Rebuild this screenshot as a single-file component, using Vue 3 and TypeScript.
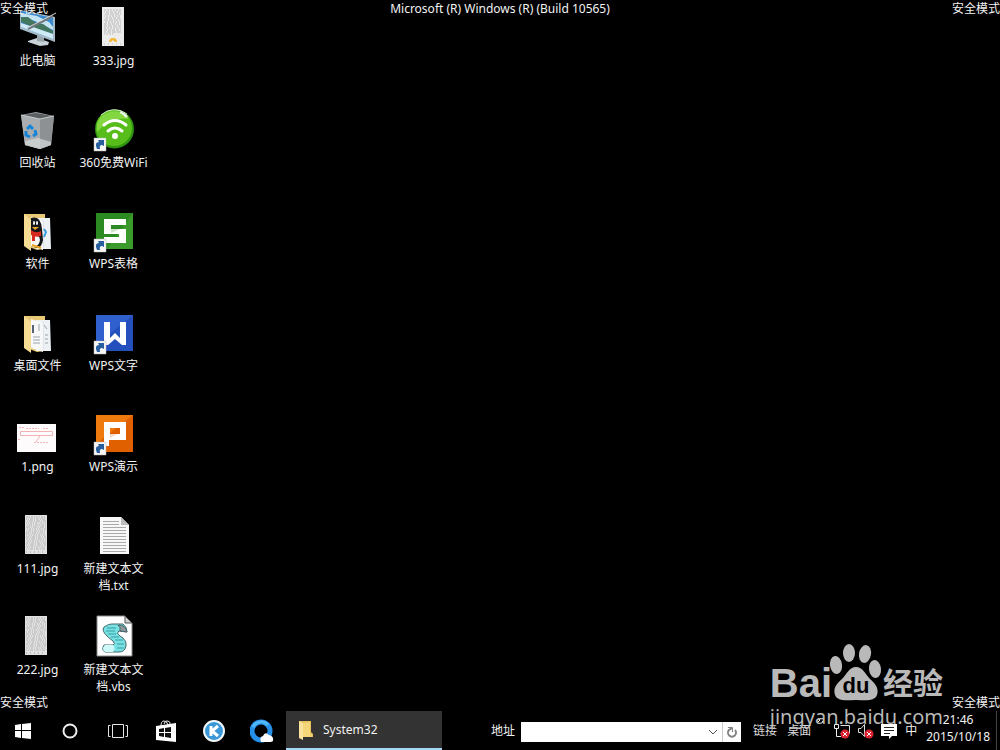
<script setup lang="ts">
import { ref } from 'vue'

type Kind =
  | 'pc' | 'bin' | 'qqfolder' | 'docfolder' | 'png' | 'jpg'
  | 'jpgsun' | 'wifi' | 'sheet' | 'writer' | 'slides' | 'txt' | 'vbs'

interface DesktopItem {
  name: string
  kind: Kind
  shortcut?: boolean
}

const items: DesktopItem[] = [
  { name: '此电脑', kind: 'pc' },
  { name: '回收站', kind: 'bin' },
  { name: '软件', kind: 'qqfolder' },
  { name: '桌面文件', kind: 'docfolder' },
  { name: '1.png', kind: 'png' },
  { name: '111.jpg', kind: 'jpg' },
  { name: '222.jpg', kind: 'jpg' },
  { name: '333.jpg', kind: 'jpgsun' },
  { name: '360免费WiFi', kind: 'wifi', shortcut: true },
  { name: 'WPS表格', kind: 'sheet', shortcut: true },
  { name: 'WPS文字', kind: 'writer', shortcut: true },
  { name: 'WPS演示', kind: 'slides', shortcut: true },
  { name: '新建文本文档.txt', kind: 'txt' },
  { name: '新建文本文档.vbs', kind: 'vbs' },
]

const corners = ['top-left', 'top-right', 'bottom-left', 'bottom-right']
const textRows = Array.from({ length: 17 }, (_, i) => i)
const address = ref('')
</script>

<template>
  <div class="screen">
    <main class="desktop">
      <div class="icons">
        <button v-for="item in items" :key="item.name" type="button" class="item">
          <svg class="picture" viewBox="0 0 49 52" aria-hidden="true">
            <g v-if="item.kind === 'pc'">
              <path d="M15 41 24 38 36 42 35 45 27 46 15 42Z" fill="#c9d2d6" />
              <path d="M24 35 31 37 31 42 24 41Z" fill="#9aa7ad" />
              <path d="M7 10 42 17 42 42 7 29Z" fill="#a5bac6" />
              <path d="M8 11 40 18 40 39 8 27Z" fill="#3a8bd0" />
              <path d="M8 13 24 16 36 22 40 27V30L22 21 8 17Z" fill="#c4e3f5" />
              <path d="M8 17 15 17 23 23 30 24 40 31 40 34 22 28 8 22Z" fill="#447760" />
              <path d="M8 23 20 27 40 34 40 39 8 27Z" fill="#cfeaf4" />
              <path d="M15 29 40 16" stroke="#6f777b" stroke-width="2" />
              <path d="M14 28 43 13" stroke="#d0d3d4" stroke-width="1" />
            </g>

            <g v-else-if="item.kind === 'bin'">
              <path d="M8 13 23 10 41 14 38 43 27 47 12 43Z" fill="#9ea2a5" />
              <path d="M8 13 27 17 27 47 12 43Z" fill="#a9adb0" />
              <path d="M27 17 41 14 38 43 27 47Z" fill="#8d9194" />
              <path d="M10 13 23 11 39 14 27 17Z" fill="#5c5f61" />
              <path d="M12 39 25 36 38 40 38 43 27 47 12 43Z" fill="#d5d8da" opacity="0.7" />
              <path d="M8 13 27 17 41 14" fill="none" stroke="#c6c9ca" />
              <g fill="none" stroke="#1684d6" stroke-width="3">
                <path d="M14 27 17 24 20 27" />
                <path d="M22 28 23 32 20 34" />
                <path d="M17 35 13 33 13 29" />
              </g>
            </g>

            <g v-else-if="item.kind === 'qqfolder' || item.kind === 'docfolder'">
              <path d="M11 11H32V17H37V45L24 47 11 42Z" fill="#e9c875" />
              <path d="M23 15 37 15 38 46 23 46Z" fill="#eef2f4" />
              <path d="M30 17V45" stroke="#cbd3d8" />
              <path d="M18 14 30 18V47L18 43Z" fill="#f7f8f8" />
              <g v-if="item.kind === 'qqfolder'">
                <path d="M31 26 33 29 31 34" fill="none" stroke="#3d9be0" stroke-width="2" />
                <path d="M18 15Q28 12 29 26L30 37Q29 44 24 45L18 43Z" fill="#15181b" />
                <path d="M18 31Q27 31 27 37Q26 43 21 44L18 43Z" fill="#f8f8f8" />
                <path d="M18 27Q23 31 28 28L28 33Q23 35 18 32Z" fill="#d8291f" />
                <path d="M19 32H22V38H19Z" fill="#d8291f" />
                <path d="M19 24H26L22 27Z" fill="#efab27" />
                <ellipse cx="21" cy="20" rx="1" ry="2" fill="#fff" />
                <ellipse cx="24" cy="20" rx="1" ry="2" fill="#fff" />
                <path d="M19 42 28 45" stroke="#eea522" stroke-width="2" />
              </g>
              <g v-else stroke="#9aa3a9">
                <path d="M20 20V28" stroke="#556274" stroke-width="2" />
                <path d="M20 32H27M20 35H27M20 38H27M31 20 34 24M32 30H35M32 34H35M32 38H35M26 19V26" />
              </g>
              <path d="M11 11 18 17V48L11 43Z" fill="#f7dd94" />
            </g>

            <g v-else-if="item.kind === 'png'">
              <path d="M4 18H43V46H4Z" fill="#fdfbfb" />
              <g fill="none" stroke="#f1b3b4">
                <path d="M7.500 25.500H39.500V29.500H7.500ZM23 36 27 30" />
                <path d="M6 21.500H11M13 22.500H26M30 22.500H35M21 36.500H35M5 33.500H7" stroke-dasharray="2 1" />
              </g>
            </g>

            <g v-else-if="item.kind === 'jpg'">
              <path d="M12 7H34V46H12Z" fill="#e2e2e2" />
              <path
                v-for="row in textRows"
                :key="row"
                :d="`M13 ${9 + row * 2}H33`"
                stroke="#b4b4b4"
                :stroke-dasharray="`${2 + (row % 3)} 1 1 1`"
                :stroke-dashoffset="(row * 7) % 5"
              />
              <path d="M13 44H33" stroke="#999" stroke-dasharray="1 3" />
            </g>

            <g v-else-if="item.kind === 'jpgsun'">
              <path d="M13 7H35V46H13Z" fill="#ececec" />
              <path
                v-for="row in textRows.slice(0, 13)"
                :key="row"
                :d="`M15 ${10 + row * 2}H${row === 12 ? 24 : 32}`"
                stroke="#b6b6b6"
                :stroke-dasharray="`${2 + (row % 3)} 1`"
                :stroke-dashoffset="(row * 7) % 5"
              />
              <path d="M20 42A4 4 0 0 1 28 42H26L24 40 22 42Z" fill="#f3b632" />
              <path d="M15 44H33" stroke="#bbb" stroke-dasharray="1 3" />
            </g>

            <g v-else-if="item.kind === 'wifi'">
              <circle cx="25.500" cy="27" r="19.500" fill="#2e9410" />
              <circle cx="25" cy="26" r="18" fill="#57bd1b" />
              <path d="M8 22A18 18 0 0 1 40 17Q22 14 8 30Z" fill="#83d842" />
              <path d="M12 13A20 20 0 0 1 38 12" fill="none" stroke="#d9ecd0" />
              <path d="M31 9A20 20 0 0 1 39 14L37 16A18 18 0 0 0 31 11Z" fill="#eff7ea" />
              <g fill="none" stroke="#fff" stroke-width="3" stroke-linecap="round">
                <path d="M15 23Q26 14 37 23" />
                <path d="M19 29Q26 23 33 29" />
              </g>
              <circle cx="26" cy="34" r="3" fill="#fff" />
            </g>

            <g v-else-if="item.kind === 'sheet'">
              <path d="M7 10H44V46H7Z" fill="#2c8a22" />
              <path d="M44 10V46H18Z" fill="#3a9a2b" />
              <path d="M15 16H37V22H22V26H37V40H15V34H30V31H15Z" fill="#fff" />
              <path d="M22 26H31L22 30Z" fill="#cfe4cb" />
            </g>

            <g v-else-if="item.kind === 'writer'">
              <path d="M7 10H44V46H7Z" fill="#2450bd" />
              <path d="M7 10H44L7 40Z" fill="#2f60cd" />
              <path d="M15 17H21V33L26 28 31 33V17H37V40H33L26 34 19 40H15Z" fill="#fff" />
            </g>

            <g v-else-if="item.kind === 'slides'">
              <path d="M7 9H44V46H7Z" fill="#e06000" />
              <path d="M7 9H44L7 38Z" fill="#ef7a0e" />
              <path d="M15 16H37V34H20V40H15ZM21 22V28H31V22Z" fill="#fff" fill-rule="evenodd" />
              <path d="M21 28H28L21 32Z" fill="#f8d9c0" />
            </g>

            <g v-else-if="item.kind === 'txt'">
              <path d="M11 9H32L40 17V46H11Z" fill="#f7f7f7" />
              <path d="M32 9 40 17H32Z" fill="#bcbcbc" />
              <path
                d="M14 13.500H30M14 16.500H30M14 19.500H37M14 22.500H37M14 25.500H37M14 28.500H37M14 31.500H37M14 34.500H37M14 37.500H37M14 40.500H37M14 43.500H37"
                stroke="#a9a9a9"
              />
            </g>

            <g v-else>
              <path d="M8 7H36L43 14V47H8Z" fill="#fff" stroke="#8b8b8b" />
              <path d="M36 7V14H43Z" fill="#d0d0d0" stroke="#555" />
              <path
                d="M17 17Q19 15 23 15L34 15Q38 18 38 23L30 22Q27 24 31 27Q38 31 37 37Q36 43 30 43H16Q12 41 15 36H24Q27 35 24 32Q14 25 14 20Q15 17 17 17Z"
                fill="#76e2e3"
                stroke="#47666b"
              />
              <path d="M16 36H24Q27 39 24 43H16Q12 40 16 36Z" fill="#cdfaf9" />
              <path d="M29 16Q37 16 38 23L31 22Q32 18 29 16Z" fill="#8e9799" stroke="#47666b" />
              <path d="M18 19H27M17 22H26M19 25H27M22 28H30M26 31H34M28 35H35M28 39H35" stroke="#3a9ba3" />
            </g>

            <g v-if="item.shortcut">
              <path d="M5 36H17V49H5Z" fill="#f6f6f6" stroke="#b8b8b8" stroke-width=".5" />
              <path d="M8 47Q5 40 10 40L9 38H15V44L13 43Q10 43 11 47Z" fill="#275f9e" />
            </g>
          </svg>
          <span class="name">{{ item.name }}</span>
        </button>
      </div>

      <span v-for="corner in corners" :key="corner" class="safe-mode" :class="corner">安全模式</span>
      <p class="build">Microsoft (R) Windows (R) (Build 10565)</p>
    </main>

    <footer class="taskbar">
      <button type="button" class="launch start" aria-label="开始">
        <svg width="18" height="18" viewBox="0 0 18 18">
          <path d="M1 3 7 2V8H1ZM8 2 17 1V8H8ZM1 9H7V16L1 15ZM8 9H17V17L8 16Z" fill="#fff" />
        </svg>
      </button>
      <button type="button" class="launch" aria-label="搜索">
        <svg width="18" height="18" viewBox="0 0 18 18">
          <circle cx="9" cy="9" r="6.500" fill="none" stroke="#eee" stroke-width="2" />
        </svg>
      </button>
      <button type="button" class="launch" aria-label="任务视图">
        <svg width="22" height="16" viewBox="0 0 22 16" fill="none" stroke="#e5e5e5">
          <path d="M5.500 1.500H16.500V14.500H5.500ZM3.500 2.500H1.500V13.500H3.500M18.500 2.500H20.500V13.500H18.500" />
        </svg>
      </button>
      <button type="button" class="launch" aria-label="应用商店">
        <svg width="22" height="24" viewBox="0 0 22 24">
          <path d="M6 7Q6 2 9 2T13 6M9 5Q10 1 13 2T15 6" fill="none" stroke="#eee" />
          <path d="M1 7 21 4V23L1 21Z" fill="#fff" />
          <path d="M4 10 9 9V13H4ZM10 9 16 8V13H10ZM4 14H9V18L4 17ZM10 14H16V19L10 18Z" fill="#111" />
        </svg>
      </button>
      <button type="button" class="launch" aria-label="酷狗音乐">
        <svg width="24" height="24" viewBox="0 0 24 24">
          <circle cx="12" cy="12" r="10" fill="#3a97d8" stroke="#f3f8fb" stroke-width="2" />
          <path d="M9 7V17M16 7 10 12 16 17" fill="none" stroke="#fff" stroke-width="3" />
        </svg>
      </button>
      <button type="button" class="launch" aria-label="浏览器">
        <svg width="24" height="24" viewBox="0 0 24 24">
          <circle cx="11" cy="12" r="9" fill="none" stroke="#268fe8" stroke-width="5" />
          <path d="M3 8A9 9 0 0 1 18 6" fill="none" stroke="#50b8f7" stroke-width="3" />
          <path d="M11 23Q9 18 13 17Q15 12 19 16Q24 17 23 22L21 23Z" fill="#fff" />
        </svg>
      </button>
      <button type="button" class="task">
        <svg width="16" height="20" viewBox="0 0 16 20">
          <path d="M1 1H13V12L15 14V17H5Z" fill="#e7bf5c" />
          <path d="M1 1 5 3V20L1 18Z" fill="#fbe39d" />
          <path d="M5 3 12 2V14L14 15V17H5Z" fill="#f5d679" />
        </svg>
        <span>System32</span>
      </button>

      <div class="tools">
        <label for="address">地址</label>
        <div class="address">
          <input id="address" v-model="address" type="text" />
          <button type="button" class="drop" aria-label="展开地址">
            <svg width="10" height="6" viewBox="0 0 10 6" fill="none" stroke="#555">
              <path d="M1 1 5 5 9 1" />
            </svg>
          </button>
          <button type="button" class="reload" aria-label="刷新">
            <svg width="12" height="12" viewBox="0 0 12 12" fill="none" stroke="#808080">
              <path d="M9 4A4 4 0 1 1 3 4L6 2" stroke-width="2" />
              <path d="M2 1.500H6.500V6" />
            </svg>
          </button>
        </div>
        <a href="#links">链接</a>
        <a href="#desktop">桌面</a>
        <button type="button" class="more" aria-label="更多">
          <svg width="8" height="6" viewBox="0 0 8 6" fill="none" stroke="#fff">
            <path d="M1 1 3 3 1 5M5 1 7 3 5 5" />
          </svg>
        </button>
      </div>

      <div class="tray">
        <button type="button" aria-label="网络">
          <svg width="18" height="16" viewBox="0 0 18 16">
            <path d="M7.500 2.500H16.500V10.500H7.500" fill="none" stroke="#ddd" />
            <path d="M1.500 1.500H5.500V5.500H1.500ZM3.500 6V13.500H8" fill="none" stroke="#eee" />
            <circle cx="12" cy="11" r="4.500" fill="#d92331" />
            <path d="M10 9 14 13M14 9 10 13" stroke="#fff" />
          </svg>
        </button>
        <button type="button" aria-label="音量">
          <svg width="18" height="16" viewBox="0 0 18 16">
            <path d="M1.500 5.500H4L7.500 1.500V13.500L4 9.500H1.500Z" fill="none" stroke="#ddd" />
            <circle cx="12" cy="11" r="4.500" fill="#d92331" />
            <path d="M10 9 14 13M14 9 10 13" stroke="#fff" />
          </svg>
        </button>
        <button type="button" aria-label="通知">
          <svg width="16" height="16" viewBox="0 0 16 16">
            <path d="M0 1H16V13H11L8 16V13H0Z" fill="#fff" />
            <path d="M3 4.500H13M3 7.500H13M3 10.500H9" stroke="#222" />
          </svg>
        </button>
        <button type="button" class="ime">中</button>
        <time class="clock" datetime="2015-10-18T21:46">
          <span>21:46</span>
          <span>2015/10/18</span>
        </time>
      </div>
    </footer>

    <div class="watermark">
      <div class="brand">
        <span class="latin">Bai</span>
        <svg class="paw" width="54" height="58" viewBox="0 0 54 58">
          <ellipse cx="7" cy="22" rx="6" ry="9" transform="rotate(-8 7 22)" />
          <ellipse cx="20" cy="10" rx="6" ry="9" />
          <ellipse cx="36" cy="11" rx="6" ry="9" transform="rotate(10 36 11)" />
          <ellipse cx="46" cy="26" rx="6" ry="9" transform="rotate(-6 46 26)" />
          <path d="M27 24C34 24 36 31 41 36C47 41 50 46 48 52C45 59 36 57 27 57C18 57 9 59 6 52C4 46 7 41 13 36C18 31 20 24 27 24Z" />
          <text x="27" y="50" text-anchor="middle">du</text>
        </svg>
        <span class="hanzi">经验</span>
      </div>
      <div class="site">jingyan.baidu.com</div>
    </div>
  </div>
</template>

<style>
body {
  margin: 0;
  background: #000;
}
</style>

<style scoped>
.screen {
  position: relative;
  display: flex;
  flex-direction: column;
  min-height: 100vh;
  background: #000;
  color: #f2f2f2;
  font: 12px/17px "Noto Sans", "Noto Sans CJK SC", sans-serif;
}

button {
  margin: 0;
  padding: 0;
  border: 0;
  background: none;
  color: inherit;
  font: inherit;
}

svg {
  display: block;
  flex: none;
}

.desktop {
  position: relative;
  flex: 1;
  display: flex;
}

.safe-mode,
.build {
  position: absolute;
  margin: 0;
  white-space: nowrap;
}

.top-left { top: 0; left: 0; }
.top-right { top: 0; right: 0; }
.bottom-left { bottom: 0; left: 0; }
.bottom-right { bottom: 0; right: 0; }

.build {
  top: 0;
  left: 0;
  right: 0;
  text-align: center;
}

.icons {
  display: grid;
  grid-auto-flow: column;
  grid-template-rows: repeat(7, minmax(86px, 1fr));
  grid-auto-columns: 75px;
  column-gap: 1px;
}

.item {
  display: flex;
  flex-direction: column;
  align-items: center;
}

.picture {
  width: 49px;
  height: 52px;
}

.name {
  width: 72px;
  text-align: center;
  text-shadow: 1px 1px 1px #000;
}

.taskbar {
  display: flex;
  align-items: stretch;
  height: 39px;
}

.launch {
  display: flex;
  flex: none;
  align-items: center;
  justify-content: center;
  width: 48px;
}

.start {
  width: 46px;
}

.task {
  display: flex;
  align-items: center;
  gap: 9px;
  box-sizing: border-box;
  flex: 0 1 156px;
  padding: 0 12px;
  border-bottom: 2px solid #a6d8f5;
  background: #333;
}

.tools {
  display: flex;
  flex: none;
  align-items: center;
  margin-left: auto;
}

.tools a {
  margin-left: 10px;
  color: #d8d8d8;
  text-decoration: none;
}

.address {
  display: flex;
  width: 220px;
  height: 20px;
  margin: 2px 2px 0 6px;
  background: #fff;
}

.address input {
  flex: 1;
  min-width: 0;
  padding: 0 4px;
  border: 0;
  outline: 0;
  background: none;
  font: inherit;
}

.drop,
.reload {
  display: flex;
  align-items: center;
  justify-content: center;
  width: 19px;
}

.reload {
  border-left: 1px solid #ccc;
}

.more {
  align-self: flex-start;
  margin: 6px 8px 0 6px;
}

.more svg {
  margin: 0;
}

.tray {
  display: flex;
  flex: none;
  align-items: center;
  gap: 6px;
  margin-right: 3px;
  padding-right: 6px;
  border-right: 1px solid #444;
}

.ime {
  margin-left: 2px;
}

.clock {
  display: flex;
  flex-direction: column;
  align-items: center;
  align-self: flex-start;
  margin-left: 3px;
}

.watermark {
  position: absolute;
  right: 57px;
  bottom: 19px;
  color: #b9b9b9;
  pointer-events: none;
}

.brand {
  display: flex;
  align-items: flex-end;
  height: 60px;
}

.latin {
  font: bold 40px/40px "Liberation Sans", sans-serif;
}

.paw {
  margin: 0 0 2px -3px;
  fill: #b9b9b9;
}

.paw text {
  fill: #000;
  font: bold 22px "Liberation Sans", sans-serif;
}

.hanzi {
  font: bold 30px/44px "Noto Sans CJK SC", sans-serif;
}

.site {
  font: 20px/28px "Noto Sans", sans-serif;
}
</style>
